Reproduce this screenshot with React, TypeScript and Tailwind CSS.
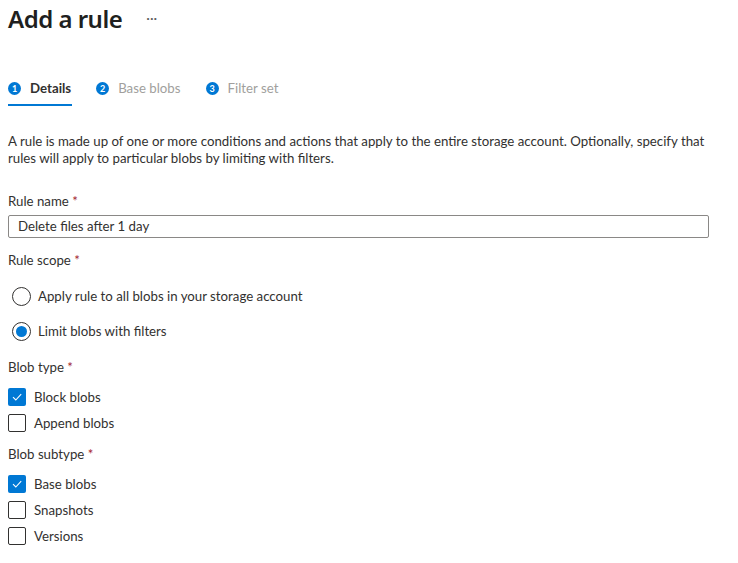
import React from "react";

const Req = () => <span className="text-[#a4262c]"> *</span>;

const Check = ({ checked, label }: { checked?: boolean; label: string }) => (
  <div className="flex items-center h-[26px]">
    {checked ? (
      <div className="w-[18px] h-[18px] rounded-[2px] bg-[#0078d4] flex items-center justify-center">
        <svg width="12" height="12" viewBox="0 0 12 12">
          <path d="M2 6.2 L4.8 9 L10.2 3.2" fill="none" stroke="white" strokeWidth="1.1" />
        </svg>
      </div>
    ) : (
      <div className="w-[18px] h-[18px] rounded-[2px] border border-[#323130] bg-white" />
    )}
    <span className="ml-[8px]">{label}</span>
  </div>
);

const Radio = ({ checked, label }: { checked?: boolean; label: string }) => (
  <div className="flex items-center h-[35px]">
    <div className="ml-[4px] w-[19px] h-[19px] rounded-full border border-[#323130] flex items-center justify-center">
      {checked && <div className="w-[11px] h-[11px] rounded-full bg-[#0078d4]" />}
    </div>
    <span className="ml-[7px]">{label}</span>
  </div>
);

export default function App() {
  return (
    <div
      className="w-[738px] h-[563px] bg-white text-[#323130] text-[13.25px] leading-[17px] pl-[8px] overflow-hidden"
      style={{ fontFamily: 'Lato, "Noto Sans", sans-serif' }}
    >
      <div className="flex items-center h-[38px]">
        <h1 className="text-[24px] font-semibold leading-[32px] text-[#201f1e]" style={{ fontFamily: '"Noto Sans", sans-serif', letterSpacing: "-0.5px" }}>Add a rule</h1>
        <span className="ml-[24px] text-[14px] text-[#605e5c] -mt-[4px]">···</span>
      </div>
      <div className="flex mt-[36px] h-[32px]">
        <div className="flex flex-col">
          <div className="flex items-center h-[28px]">
            <span className="w-[13px] h-[13px] rounded-full bg-[#0078d4] text-white text-[9px] font-bold flex items-center justify-center">1</span>
            <span className="ml-[9px] font-bold">Details</span>
          </div>
          <div className="h-[2px] bg-[#0078d4] mt-[2px] mr-[-1px]" />
        </div>
        <div className="flex items-center h-[28px] ml-[25px]">
          <span className="w-[13px] h-[13px] rounded-full bg-[#0078d4] text-white text-[9px] font-bold flex items-center justify-center">2</span>
          <span className="ml-[9px] text-[#a19f9d]">Base blobs</span>
        </div>
        <div className="flex items-center h-[28px] ml-[25px]">
          <span className="w-[13px] h-[13px] rounded-full bg-[#0078d4] text-white text-[9px] font-bold flex items-center justify-center">3</span>
          <span className="ml-[9px] text-[#a19f9d]">Filter set</span>
        </div>
      </div>
      <p className="mt-[27px] pr-[28px]">
        A rule is made up of one or more conditions and actions that apply to the entire storage account. Optionally, specify that rules will apply to particular blobs by limiting with filters.
      </p>
      <div className="mt-[26px]">Rule name<Req /></div>
      <div className="mt-[5px] w-[701px] h-[23px] border border-[#8a8886] rounded-[2px] flex items-center pl-[9px]">
        Delete files after 1 day
      </div>
      <div className="mt-[14px]">Rule scope<Req /></div>
      <div className="mt-[10px]">
        <Radio label="Apply rule to all blobs in your storage account" />
        <Radio checked label="Limit blobs with filters" />
      </div>
      <div className="mt-[10px]">Blob type<Req /></div>
      <div className="mt-[8px]">
        <Check checked label="Block blobs" />
        <Check label="Append blobs" />
      </div>
      <div className="mt-[10px]">Blob subtype<Req /></div>
      <div className="mt-[8px]">
        <Check checked label="Base blobs" />
        <Check label="Snapshots" />
        <Check label="Versions" />
      </div>
    </div>
  );
}
